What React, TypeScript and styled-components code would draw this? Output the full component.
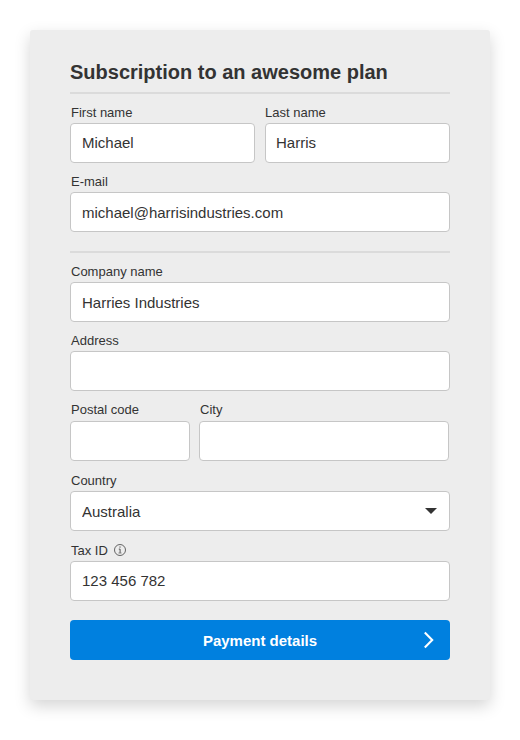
import React from "react";
import styled, { createGlobalStyle, css } from "styled-components";

const GlobalStyle = createGlobalStyle`
  *, *::before, *::after { box-sizing: border-box; }
  body {
    margin: 0;
    background: #fff;
    color: #333;
    font-family: "Liberation Sans", Arial, Helvetica, sans-serif;
  }
`;

const Card = styled.form`
  width: 460px;
  height: 670px;
  margin: 30px;
  padding: 30px 40px 40px;
  display: flex;
  flex-direction: column;
  border-radius: 3px;
  background: #ededed;
  box-shadow: 0 6px 16px rgba(0, 0, 0, 0.17);
`;

const Title = styled.h1`
  margin: 0;
  height: 32px;
  font-size: 20px;
  line-height: 24px;
  font-weight: 700;
  white-space: nowrap;
`;

const Divider = styled.hr<{ $top?: number }>`
  width: 100%;
  height: 2px;
  margin: ${(p) => p.$top ?? 0}px 0 0;
  border: 0;
  background: #dbdbdb;
`;

const Row = styled.div<{ $top: number; $columns?: string; $gap?: number }>`
  display: grid;
  grid-template-columns: ${(p) => p.$columns ?? "1fr"};
  column-gap: ${(p) => p.$gap ?? 10}px;
  margin-top: ${(p) => p.$top}px;
`;

const FieldBlock = styled.div`
  min-width: 0;
`;

const Label = styled.label<{ $lift?: number; $flush?: boolean }>`
  display: flex;
  align-items: center;
  height: 20px;
  padding: 0 0 ${(p) => (p.$lift ?? 0) * 2}px ${(p) => (p.$flush ? 0 : 1)}px;
  font-size: 13px;
  line-height: 18px;
  white-space: nowrap;

  svg {
    margin: 0 0 2px 6px;
  }
`;

const controlStyle = css`
  display: block;
  width: 100%;
  height: 40px;
  margin: 0;
  border: 1px solid #c6c6c6;
  border-radius: 4px;
  background: #fff;
  color: #333;
  font-family: inherit;
  font-size: 15px;
  outline: none;
`;

const Input = styled.input<{ $lift?: number; $flush?: boolean }>`
  ${controlStyle}
  padding: 0 11px ${(p) => (p.$lift ?? 0) * 2}px ${(p) => (p.$flush ? 10 : 11)}px;
`;

const SelectFrame = styled.div`
  display: grid;
  align-items: center;

  > * {
    grid-area: 1 / 1;
  }

  svg {
    justify-self: end;
    margin-right: 13px;
    pointer-events: none;
  }
`;

const Select = styled.select`
  ${controlStyle}
  appearance: none;
  padding: 0 11px;
`;

const SubmitButton = styled.button`
  display: grid;
  grid-template-columns: 1fr auto 1fr;
  align-items: center;
  width: 100%;
  height: 40px;
  margin-top: 19px;
  padding: 0 15px;
  border: 0;
  border-radius: 4px;
  background: #0080df;
  color: #fff;
  font-family: inherit;
  font-size: 15px;
  font-weight: 700;

  span {
    grid-column: 2;
  }

  svg {
    justify-self: end;
  }
`;

const InfoIcon = () => (
  <svg width="12" height="12" viewBox="0 0 12 12" fill="none" stroke="#555">
    <circle cx="6" cy="6" r="5.5" strokeWidth="0.9" />
    <path d="M6 2.4v1.3M4.8 5.1h1.3v3.7" strokeWidth="1" />
    <path d="M4.5 9h3" strokeWidth="0.7" />
  </svg>
);

const CaretIcon = () => (
  <svg width="12" height="6" viewBox="0 0 12 6" fill="#333">
    <path d="M0 0h12L6 6z" />
  </svg>
);

const ChevronIcon = () => (
  <svg width="12" height="18" viewBox="0 0 12 18" fill="none" stroke="#fff" strokeWidth="2.1">
    <path d="M1.8 1.6 9.2 9 1.8 16.4" />
  </svg>
);

type FieldProps = {
  id: string;
  label: string;
  value?: string;
  inputLift?: number;
  labelLift?: number;
  flush?: boolean;
  info?: boolean;
};

const Field = ({ id, label, value = "", inputLift, labelLift, flush, info }: FieldProps) => (
  <FieldBlock>
    <Label htmlFor={id} $lift={labelLift} $flush={flush}>
      {label}
      {info && <InfoIcon />}
    </Label>
    <Input id={id} defaultValue={value} $lift={inputLift} $flush={flush} />
  </FieldBlock>
);

export default function App() {
  return (
    <>
      <GlobalStyle />
      <Card onSubmit={(e) => e.preventDefault()}>
        <Title>Subscription to an awesome plan</Title>
        <Divider />
        <Row $top={9} $columns="1fr 1fr">
          <Field id="first" label="First name" value="Michael" inputLift={1} />
          <Field id="last" label="Last name" value="Harris" inputLift={1} flush />
        </Row>
        <Row $top={9}>
          <Field id="email" label="E-mail" value="michael@harrisindustries.com" />
        </Row>
        <Divider $top={19} />
        <Row $top={9}>
          <Field id="company" label="Company name" value="Harries Industries" />
        </Row>
        <Row $top={9}>
          <Field id="address" label="Address" />
        </Row>
        <Row $top={10} $columns="120px 250px" $gap={9}>
          <Field id="postal" label="Postal code" labelLift={1} />
          <Field id="city" label="City" labelLift={1} />
        </Row>
        <Row $top={10}>
          <FieldBlock>
            <Label htmlFor="country">Country</Label>
            <SelectFrame>
              <Select id="country" defaultValue="Australia">
                <option>Australia</option>
              </Select>
              <CaretIcon />
            </SelectFrame>
          </FieldBlock>
        </Row>
        <Row $top={10}>
          <Field id="tax" label="Tax ID" value="123 456 782" inputLift={1} info />
        </Row>
        <SubmitButton type="submit">
          <span>Payment details</span>
          <ChevronIcon />
        </SubmitButton>
      </Card>
    </>
  );
}
